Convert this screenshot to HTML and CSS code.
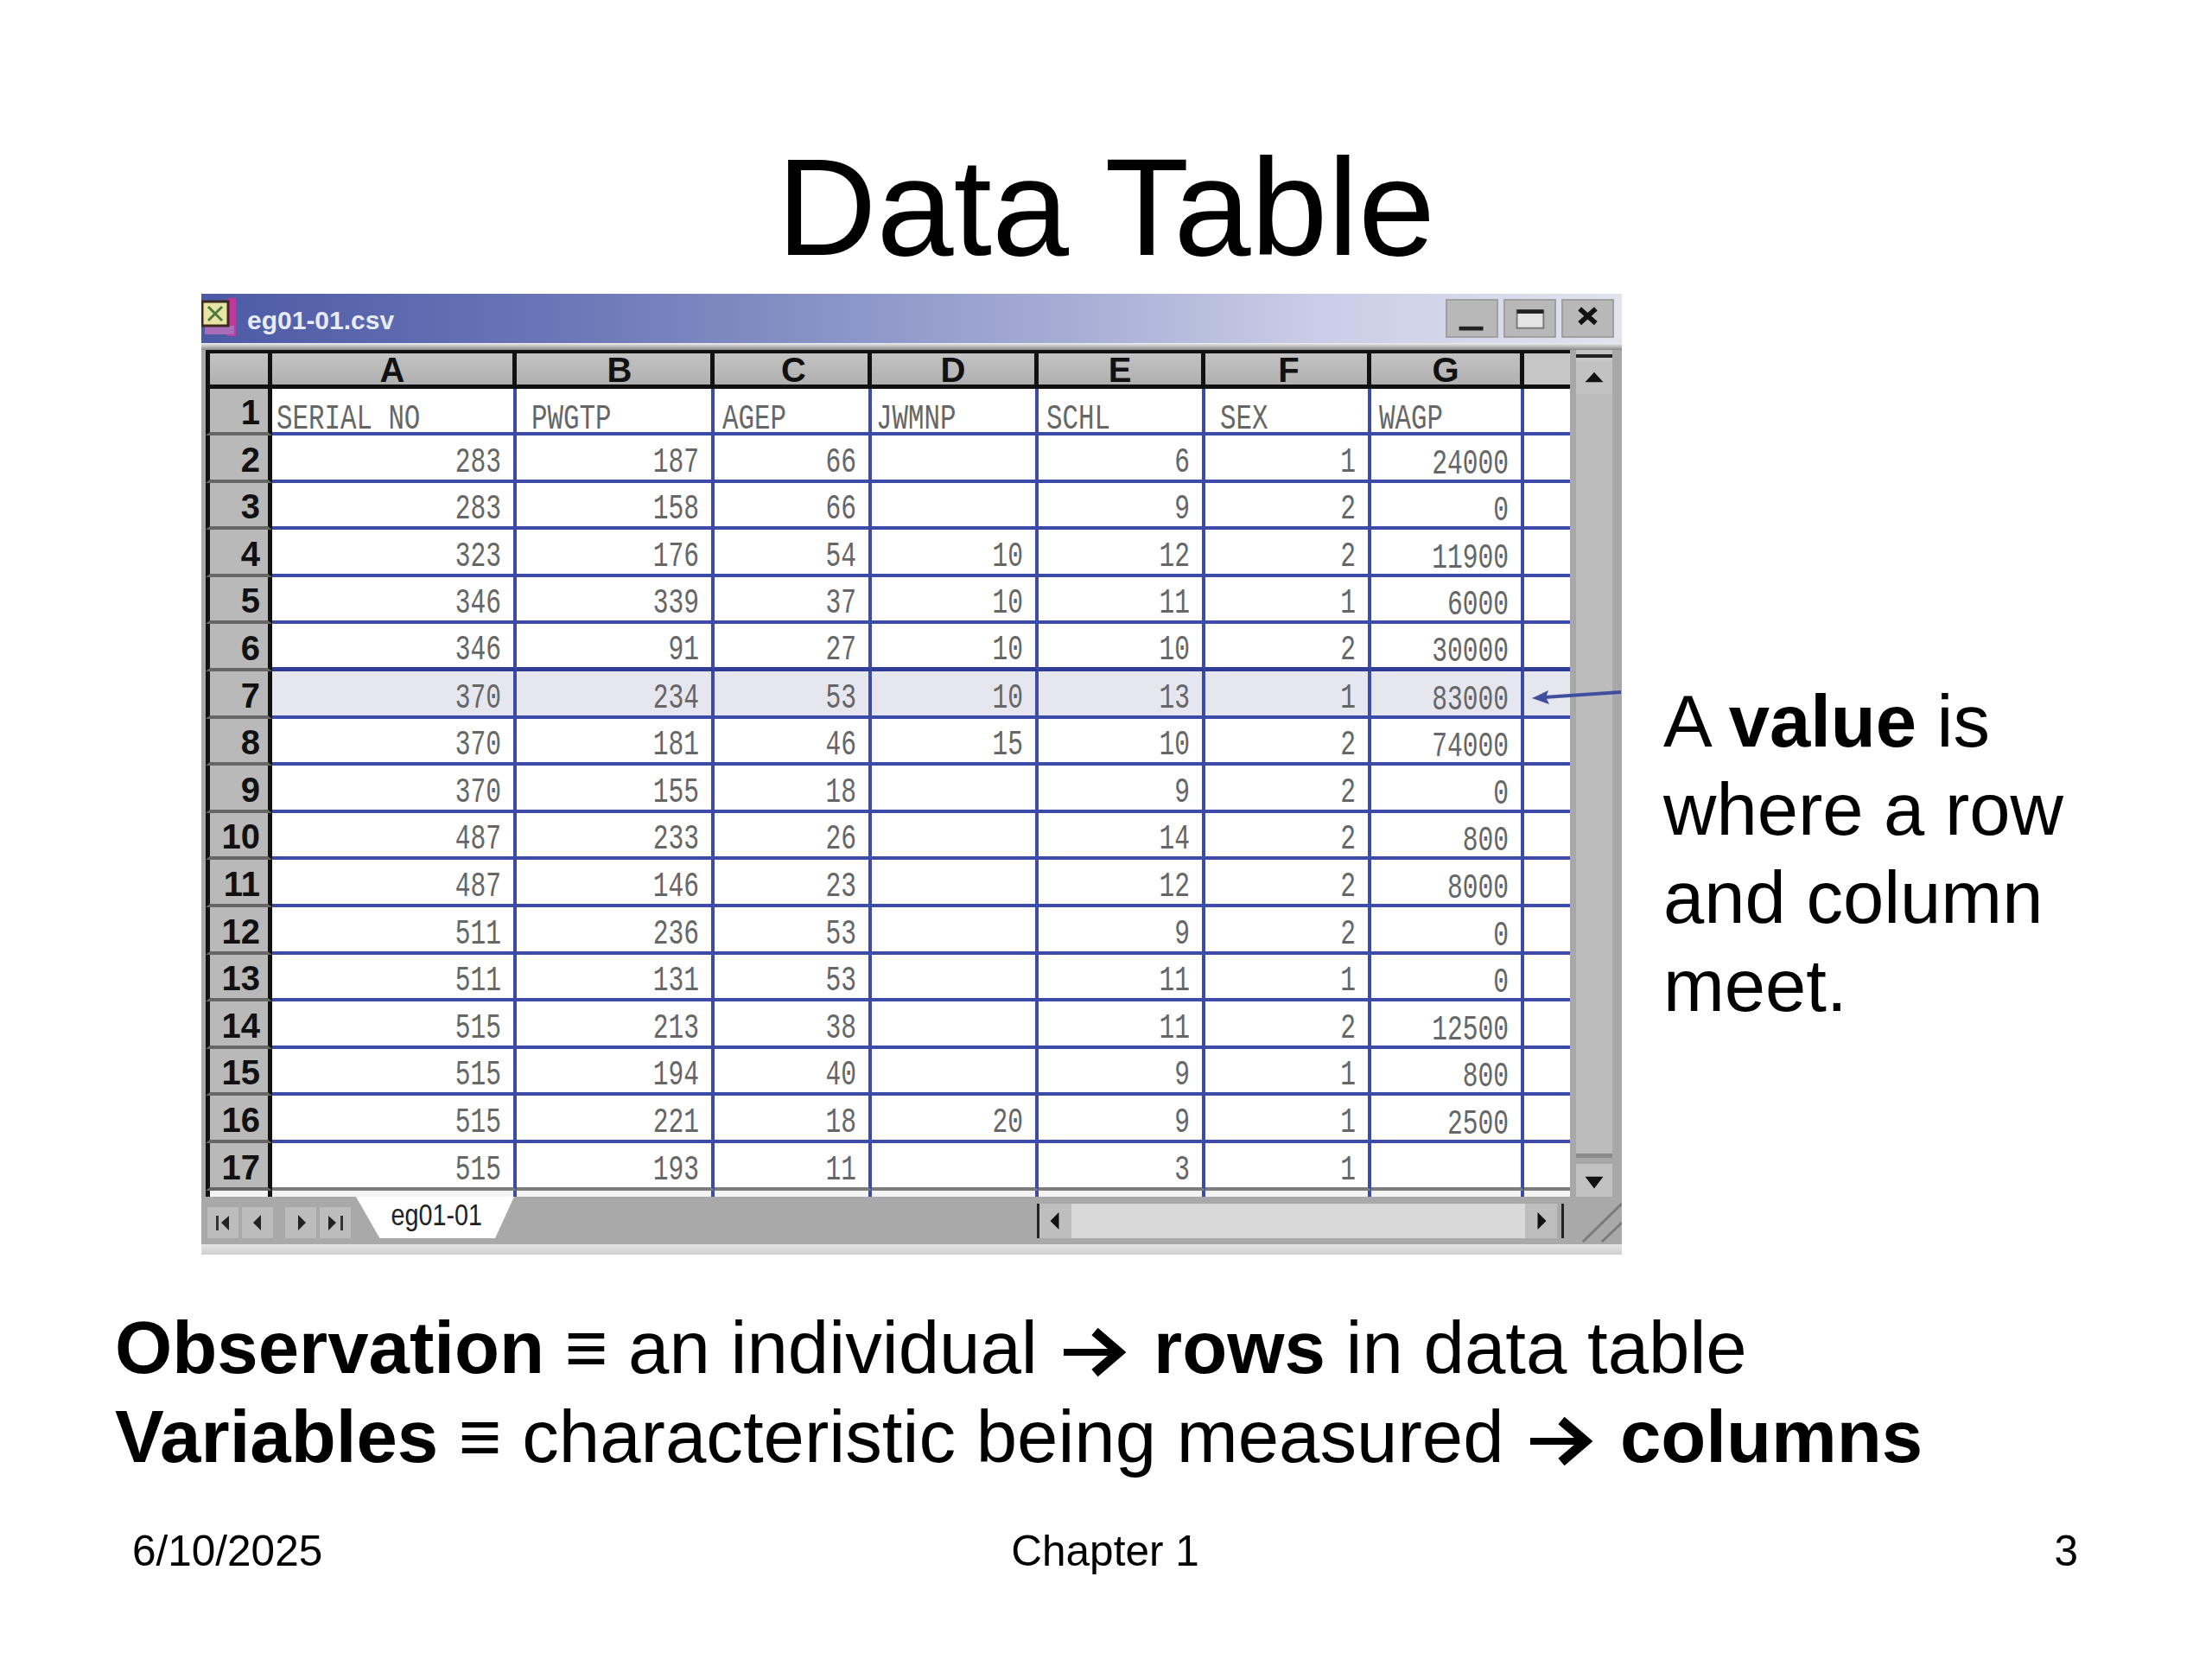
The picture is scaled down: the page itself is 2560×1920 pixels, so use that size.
FILE: index.html
```html
<!DOCTYPE html>
<html lang="en">
<head>
<meta charset="utf-8">
<title>Data Table</title>
<link rel="stylesheet" href="styles.css">
</head>
<body>
<main class="slide">
  <h1 class="title">Data Table</h1>
  <section class="main-row">
    <div class="window">
      <div class="titlebar">
        <svg class="app-icon" viewBox="0 0 44 48" aria-hidden="true">
          <rect x="30" y="2" width="10" height="44" fill="#c0399a"/>
          <rect x="4" y="34" width="34" height="10" fill="#a86cb8"/>
          <rect x="1" y="6" width="30" height="28" fill="#e8e4a8" stroke="#3a2a20" stroke-width="3"/>
          <path d="M8 12 L24 28 M24 12 L8 28" stroke="#4a7a40" stroke-width="3"/>
        </svg>
        <span class="file-name">eg01-01.csv</span>
        <div class="win-buttons">
          <span class="win-btn"><svg viewBox="0 0 60 44" aria-hidden="true"><rect x="14" y="32" width="30" height="5" fill="#222"/></svg></span>
          <span class="win-btn"><svg viewBox="0 0 60 44" aria-hidden="true"><rect x="14" y="12" width="33" height="22" fill="#e4e4e4" stroke="#777" stroke-width="2"/><rect x="14" y="11" width="33" height="5" fill="#222"/></svg></span>
          <span class="win-btn"><svg viewBox="0 0 60 44" aria-hidden="true"><path d="M20 10 L40 28 M40 10 L20 28" stroke="#111" stroke-width="6"/></svg></span>
        </div>
      </div>
      <div class="title-edge"></div>
      <div class="body">
        <div class="sheet">
          <div class="corner"></div>
          <div class="ch">A</div><div class="ch ch-b">B</div><div class="ch ch-s">C</div><div class="ch">D</div><div class="ch">E</div><div class="ch ch-s">F</div><div class="ch">G</div><div class="ch ch-last"></div>

          <div class="rh">1</div>
          <div class="c ind-xs"><span class="t">SERIAL NO</span></div><div class="c ind-l"><span class="t">PWGTP</span></div><div class="c ind-s"><span class="t">AGEP</span></div><div class="c ind-xs"><span class="t">JWMNP</span></div><div class="c ind-s"><span class="t">SCHL</span></div><div class="c ind-l"><span class="t">SEX</span></div><div class="c ind-s"><span class="t">WAGP</span></div><div class="c c-last"></div>

          <div class="rh">2</div>
          <div class="c n"><span>283</span></div><div class="c n"><span>187</span></div><div class="c n"><span>66</span></div><div class="c n"></div><div class="c n"><span>6</span></div><div class="c n"><span>1</span></div><div class="c n g"><span>24000</span></div><div class="c c-last"></div>

          <div class="rh">3</div>
          <div class="c n"><span>283</span></div><div class="c n"><span>158</span></div><div class="c n"><span>66</span></div><div class="c n"></div><div class="c n"><span>9</span></div><div class="c n"><span>2</span></div><div class="c n g"><span>0</span></div><div class="c c-last"></div>

          <div class="rh">4</div>
          <div class="c n"><span>323</span></div><div class="c n"><span>176</span></div><div class="c n"><span>54</span></div><div class="c n"><span>10</span></div><div class="c n"><span>12</span></div><div class="c n"><span>2</span></div><div class="c n g"><span>11900</span></div><div class="c c-last"></div>

          <div class="rh">5</div>
          <div class="c n"><span>346</span></div><div class="c n"><span>339</span></div><div class="c n"><span>37</span></div><div class="c n"><span>10</span></div><div class="c n"><span>11</span></div><div class="c n"><span>1</span></div><div class="c n g"><span>6000</span></div><div class="c c-last"></div>

          <div class="rh">6</div>
          <div class="c n strong"><span>346</span></div><div class="c n strong"><span>91</span></div><div class="c n strong"><span>27</span></div><div class="c n strong"><span>10</span></div><div class="c n strong"><span>10</span></div><div class="c n strong"><span>2</span></div><div class="c n g strong"><span>30000</span></div><div class="c c-last strong"></div>

          <div class="rh">7</div>
          <div class="c n hl"><span>370</span></div><div class="c n hl"><span>234</span></div><div class="c n hl"><span>53</span></div><div class="c n hl"><span>10</span></div><div class="c n hl"><span>13</span></div><div class="c n hl"><span>1</span></div><div class="c n g hl"><span>83000</span></div><div class="c c-last hl"></div>

          <div class="rh">8</div>
          <div class="c n"><span>370</span></div><div class="c n"><span>181</span></div><div class="c n"><span>46</span></div><div class="c n"><span>15</span></div><div class="c n"><span>10</span></div><div class="c n"><span>2</span></div><div class="c n g"><span>74000</span></div><div class="c c-last"></div>

          <div class="rh">9</div>
          <div class="c n"><span>370</span></div><div class="c n"><span>155</span></div><div class="c n"><span>18</span></div><div class="c n"></div><div class="c n"><span>9</span></div><div class="c n"><span>2</span></div><div class="c n g"><span>0</span></div><div class="c c-last"></div>

          <div class="rh">10</div>
          <div class="c n"><span>487</span></div><div class="c n"><span>233</span></div><div class="c n"><span>26</span></div><div class="c n"></div><div class="c n"><span>14</span></div><div class="c n"><span>2</span></div><div class="c n g"><span>800</span></div><div class="c c-last"></div>

          <div class="rh">11</div>
          <div class="c n"><span>487</span></div><div class="c n"><span>146</span></div><div class="c n"><span>23</span></div><div class="c n"></div><div class="c n"><span>12</span></div><div class="c n"><span>2</span></div><div class="c n g"><span>8000</span></div><div class="c c-last"></div>

          <div class="rh">12</div>
          <div class="c n"><span>511</span></div><div class="c n"><span>236</span></div><div class="c n"><span>53</span></div><div class="c n"></div><div class="c n"><span>9</span></div><div class="c n"><span>2</span></div><div class="c n g"><span>0</span></div><div class="c c-last"></div>

          <div class="rh">13</div>
          <div class="c n"><span>511</span></div><div class="c n"><span>131</span></div><div class="c n"><span>53</span></div><div class="c n"></div><div class="c n"><span>11</span></div><div class="c n"><span>1</span></div><div class="c n g"><span>0</span></div><div class="c c-last"></div>

          <div class="rh">14</div>
          <div class="c n"><span>515</span></div><div class="c n"><span>213</span></div><div class="c n"><span>38</span></div><div class="c n"></div><div class="c n"><span>11</span></div><div class="c n"><span>2</span></div><div class="c n g"><span>12500</span></div><div class="c c-last"></div>

          <div class="rh">15</div>
          <div class="c n"><span>515</span></div><div class="c n"><span>194</span></div><div class="c n"><span>40</span></div><div class="c n"></div><div class="c n"><span>9</span></div><div class="c n"><span>1</span></div><div class="c n g"><span>800</span></div><div class="c c-last"></div>

          <div class="rh">16</div>
          <div class="c n"><span>515</span></div><div class="c n"><span>221</span></div><div class="c n"><span>18</span></div><div class="c n"><span>20</span></div><div class="c n"><span>9</span></div><div class="c n"><span>1</span></div><div class="c n g"><span>2500</span></div><div class="c c-last"></div>

          <div class="rh">17</div>
          <div class="c n end"><span>515</span></div><div class="c n end"><span>193</span></div><div class="c n end"><span>11</span></div><div class="c n end"></div><div class="c n end"><span>3</span></div><div class="c n end"><span>1</span></div><div class="c n end"></div><div class="c c-last end"></div>

          <div class="rh tail"></div>
          <div class="c tail"></div><div class="c tail"></div><div class="c tail"></div><div class="c tail"></div><div class="c tail"></div><div class="c tail"></div><div class="c tail"></div><div class="c c-last tail"></div>
        </div>
        <div class="vscroll">
          <div class="vsplit"></div>
          <div class="sbtn"><svg viewBox="0 0 40 36" aria-hidden="true"><path d="M20 12 L30 23 L10 23 Z" fill="#111"/></svg></div>
          <div class="vtrack"></div>
          <div class="sbtn"><svg viewBox="0 0 40 36" aria-hidden="true"><path d="M20 27 L30 14 L10 14 Z" fill="#111"/></svg></div>
        </div>
      </div>
      <div class="tabbar">
        <div class="tabnav">
          <span class="navbtn"><svg viewBox="0 0 36 36" aria-hidden="true"><rect x="10" y="10" width="3" height="17" fill="#333"/><path d="M16 18 L25 10 L25 27 Z" fill="#222"/></svg></span>
          <span class="navbtn"><svg viewBox="0 0 36 36" aria-hidden="true"><path d="M13 18 L22 9 L22 27 Z" fill="#222"/></svg></span>
          <span class="navbtn nav-gap"><svg viewBox="0 0 36 36" aria-hidden="true"><path d="M24 18 L15 9 L15 27 Z" fill="#222"/></svg></span>
          <span class="navbtn"><svg viewBox="0 0 36 36" aria-hidden="true"><path d="M19 18 L10 10 L10 27 Z" fill="#222"/><rect x="24" y="10" width="3" height="17" fill="#333"/></svg></span>
        </div>
        <div class="tab"><span>eg01-01</span></div>
        <div class="tab-space"></div>
        <div class="hscroll">
          <span class="hbtn"><svg viewBox="0 0 36 40" aria-hidden="true"><path d="M12 20 L22 10 L22 30 Z" fill="#111"/></svg></span>
          <span class="hthumb"></span>
          <span class="hbtn"><svg viewBox="0 0 36 40" aria-hidden="true"><path d="M24 20 L14 10 L14 30 Z" fill="#111"/></svg></span>
        </div>
        <svg class="grip" viewBox="0 0 47 55" aria-hidden="true"><path d="M2 52 L47 8 M24 52 L47 30" stroke="#7a7a7a" stroke-width="3" fill="none"/></svg>
      </div>
      <div class="win-foot"></div>
      <svg class="pointer" viewBox="0 0 104 20" aria-hidden="true"><path d="M14 12 L103 6" stroke="#3f4f9e" stroke-width="4" fill="none"/><path d="M0 13 L19 4 L16 12 L20 20 Z" fill="#3f4f9e"/></svg>
    </div>
    <p class="callout">A <b>value</b> is<br>where a row<br>and column<br>meet.</p>
  </section>
  <section class="defs">
    <p class="def"><b>Observation</b> ≡ an individual <svg class="arrow" viewBox="0 0 87 60" aria-hidden="true"><path d="M7 30 H66" stroke="#000" stroke-width="8" fill="none"/><path d="M43 6 L71 30 L43 54" stroke="#000" stroke-width="11" fill="none"/></svg> <b>rows</b> in data table</p>
    <p class="def"><b>Variables</b> ≡ characteristic being measured <svg class="arrow" viewBox="0 0 87 60" aria-hidden="true"><path d="M7 30 H66" stroke="#000" stroke-width="8" fill="none"/><path d="M43 6 L71 30 L43 54" stroke="#000" stroke-width="11" fill="none"/></svg> <b>columns</b></p>
  </section>
  <footer class="footer">
    <span>6/10/2025</span>
    <span>Chapter 1</span>
    <span class="page-no">3</span>
  </footer>
</main>
</body>
</html>
```
FILE: styles.css
```css
* { box-sizing: border-box; }
html, body { margin: 0; padding: 0; background: #fff; }
body { font-family: "Liberation Sans", Arial, sans-serif; color: #000; }

.slide { width: 2560px; height: 1920px; padding-top: 162px; overflow: hidden; }
.title { margin: 0 0 22px; font-size: 160px; line-height: 156px; font-weight: 400; text-align: center; }

.main-row { display: flex; align-items: flex-start; padding-left: 233px; }
.window { position: relative; width: 1644px; height: 1112px; background: #a8a8a8; flex: none; display: flex; flex-direction: column; }

.titlebar { height: 57px; display: flex; align-items: center; background: linear-gradient(90deg, #4c5aa6 0%, #6a76b6 25%, #a4abd4 60%, #c8cce6 78%, #e2e3ef 100%); }
.app-icon { width: 44px; height: 48px; flex: none; margin-top: -4px; }
.file-name { margin-left: 9px; margin-top: 5px; font-size: 30px; font-weight: 700; color: #e8ebf6; }
.win-buttons { margin-left: auto; margin-right: 9px; display: flex; gap: 6px; }
.win-btn { width: 61px; height: 45px; background: #b8b8b8; border: 2px solid #a0a0a0; display: block; }
.win-btn svg { display: block; width: 100%; height: 100%; }
.title-edge { height: 8px; background: linear-gradient(#f0f0f0, #888); }

.body { display: flex; height: 980px; padding-left: 5px; }
.sheet { width: 1579px; flex: none; display: grid; grid-template-columns: 77px 283px 229px 182px 193px 193px 192px 177px 53px; grid-template-rows: 45px 54px repeat(16, 54.6px) 7.4px; background: #fff; }

.corner, .ch { background: linear-gradient(#c2c2c2, #b0b0b0); border-top: 4px solid #111; border-bottom: 5px solid #111; border-right: 5px solid #111; }
.corner { border-left: 5px solid #111; }
.ch { display: flex; justify-content: center; align-items: flex-end; padding-bottom: 2px; font-size: 40px; line-height: 30px; font-weight: 700; color: #111; }
.ch-b { padding-left: 14px; }
.ch-s { padding-left: 6px; }
.ch-last { border-right: 0; background: #c6c6c6; }

.rh { background: #b9b9b9; border-left: 5px solid #111; border-right: 5px solid #111; border-bottom: 4px solid #666; padding: 0 9px 4px 0; display: flex; justify-content: flex-end; align-items: flex-end; font-size: 40px; line-height: 38px; font-weight: 700; color: #111; }
.rh.tail { border-bottom: 0; padding: 0; }

.c { border-right: 4px solid #3c4aa8; border-bottom: 4px solid #3c4aa8; display: flex; align-items: flex-end; padding-left: 3px; font-family: "Liberation Mono", "Courier New", monospace; font-size: 40px; line-height: 36px; color: #666; white-space: nowrap; background: #fff; }
.c > span { display: inline-block; transform: scaleX(.74); transform-origin: left bottom; margin-bottom: 1px; }
.c > .t { transform: scaleX(.77); position: relative; top: 5px; }
.c-last { border-right: 0; }
.ind-xs { padding-left: 5px; }
.ind-s { padding-left: 9px; }
.ind-l { padding-left: 17px; }
.n { justify-content: flex-end; padding: 0 14px 0 0; }
.n > span { transform-origin: right bottom; }
.g > span { position: relative; top: 2px; }
.hl { background: #e6e6ef; }
.strong { border-bottom: 5px solid #2f3d96; }
.end { border-bottom: 4px solid #7c7c7c; }
.tail { border-bottom: 0; background: #f4f4f4; }

.vscroll { width: 42px; margin-left: 7px; flex: none; display: flex; flex-direction: column; }
.vsplit { height: 13px; background: linear-gradient(#c4c4c4 0 5px, #222 5px 9px, #c8c8c8 9px); }
.sbtn { height: 38px; background: #c2c2c2; flex: none; }
.sbtn svg { display: block; width: 100%; height: 100%; }
.vtrack { flex: 1; background: #bcbcbc; border-bottom: 5px solid #8a8a8a; margin-bottom: 7px; }

.tabbar { height: 55px; display: flex; align-items: flex-start; padding-left: 7px; background: #a9a9a9; }
.tabnav { display: flex; gap: 4px; padding-top: 12px; width: 172px; flex: none; }
.navbtn { width: 36px; height: 36px; background: #bcbcbc; display: block; flex: none; }
.navbtn svg { display: block; width: 100%; height: 100%; }
.nav-gap { margin-left: 10px; }
.tab { width: 183px; height: 48px; flex: none; background: #fff; clip-path: polygon(0 0, 100% 0, 88% 100%, 15% 100%); display: flex; justify-content: center; font-size: 35px; line-height: 42px; color: #222; }
.tab span { display: inline-block; transform: scaleX(.82); margin-left: 4px; }
.tab-space { width: 605px; flex: none; }
.hscroll { width: 610px; flex: none; height: 40px; margin-top: 8px; display: flex; border-left: 3px solid #222; border-right: 3px solid #222; padding-right: 5px; }
.hbtn { width: 37px; flex: none; background: #bebebe; display: block; }
.hbtn svg { display: block; width: 100%; height: 100%; }
.hthumb { flex: 1; background: #d8d8d8; }
.grip { width: 47px; height: 55px; flex: none; margin-left: 20px; }

.win-foot { height: 12px; background: linear-gradient(#e4e4e4, #d0d0d0); }
.pointer { position: absolute; right: 0; top: 455px; width: 104px; height: 20px; }

.callout { margin: 444px 0 0 48px; font-size: 85px; line-height: 102px; white-space: nowrap; }

.defs { margin-top: 56px; padding-left: 133px; }
.def { margin: 0; font-size: 85.2px; line-height: 103px; white-space: nowrap; }
.arrow { width: 87px; height: 60px; vertical-align: -6px; }

.footer { margin: 51px 155px 0 153px; display: grid; grid-template-columns: 1fr auto 1fr; font-size: 49.5px; line-height: 60px; }
.page-no { text-align: right; }
```
